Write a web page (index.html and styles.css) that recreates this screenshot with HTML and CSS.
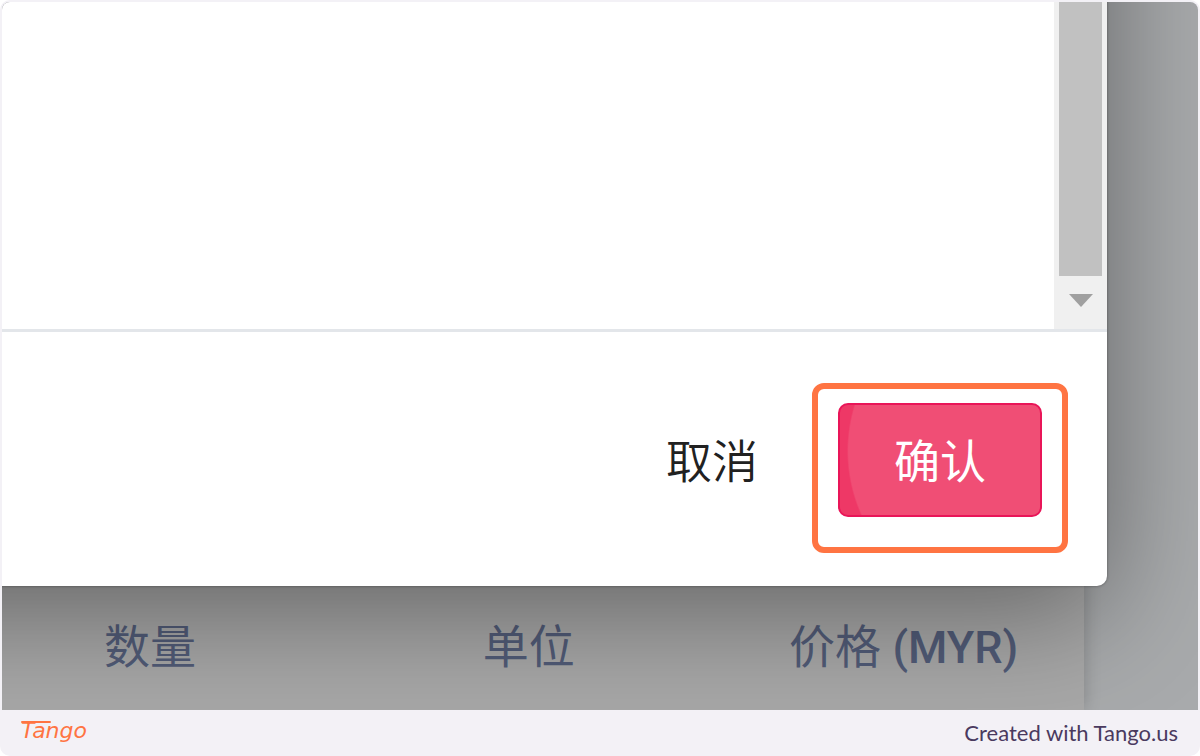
FILE: index.html
```html
<!DOCTYPE html>
<html lang="zh-CN">
<head>
    <meta charset="UTF-8">
    <meta name="viewport" content="width=device-width, initial-scale=1.0">
    <title>Tango</title>
    <link rel="stylesheet" href="styles.css">
</head>
<body>
    <div class="card">
        <main class="screen">
            <div class="sheet">
                <table class="items">
                    <thead>
                        <tr>
                            <th class="col-qty" scope="col">数量</th>
                            <th class="col-unit" scope="col">单位</th>
                            <th class="col-price" scope="col">价格 <span class="currency">(MYR)</span></th>
                        </tr>
                    </thead>
                </table>
            </div>

            <div class="modal" role="dialog">
                <div class="modal-body">
                    <div class="scrollbar">
                        <div class="thumb"></div>
                        <svg class="arrow" width="24" height="13" viewBox="0 0 24 13">
                            <path d="M0 0H24L12 13Z" fill="#a0a0a0"/>
                        </svg>
                    </div>
                </div>
                <div class="modal-footer">
                    <button class="btn cancel" type="button">取消</button>
                    <div class="highlight">
                        <button class="btn confirm" type="button">确认</button>
                    </div>
                </div>
            </div>
        </main>

        <footer class="footer">
            <svg class="logo" width="84" height="44" viewBox="0 0 84 44" role="img" aria-label="Tango">
                <path d="M4 12H32" fill="none" stroke="#ff7442" stroke-width="2" stroke-linecap="round"/>
                <text class="logo-text" x="3" y="28">Tango</text>
            </svg>
            <a class="credit" href="#">Created with Tango.us</a>
        </footer>
    </div>
</body>
</html>
```

FILE: styles.css
```css
* {
    box-sizing: border-box;
}

body {
    margin: 0;
    background-color: #fff;
    font-family: Roboto, "Noto Sans CJK SC", sans-serif;
}

.card {
    display: flex;
    flex-direction: column;
    min-height: 100vh;
    padding: 2px 2px 0;
    border-radius: 10px;
    background-color: #f3f1f6;
}

.screen {
    position: relative;
    display: flex;
    flex: 1;
    overflow: hidden;
    border-radius: 8px 8px 0 0;
    padding-right: 114px;
    background-color: #a8aaac;
}

/* page behind the dialog */
.sheet {
    display: flex;
    flex: 1;
    align-items: flex-end;
    background-color: #a8a8a8;
    box-shadow: 0 0 16px rgba(0, 0, 0, 0.2);
}

.items {
    width: 100%;
    table-layout: fixed;
    border-collapse: collapse;
}

.items th {
    height: 124px;
    padding: 0 0 2px;
    color: #525c78;
    font-size: 46px;
    font-weight: 400;
    line-height: 56px;
    white-space: nowrap;
}

.items .col-qty {
    width: 27%;
    padding-left: 4px;
}

.items .col-unit {
    width: 43%;
    padding-left: 4px;
}

.items .col-price {
    padding-right: 36px;
}

.items .currency {
    font-size: 45px;
    font-weight: 500;
}

/* dialog, runs past the top and left edges */
.modal {
    position: absolute;
    top: -160px;
    right: 91px;
    bottom: 124px;
    left: -160px;
    display: flex;
    flex-direction: column;
    border-radius: 10px;
    background-color: #fff;
    box-shadow: 0 0 3px rgba(0, 0, 0, 0.4), 0 24px 120px rgba(0, 0, 0, 0.42);
}

.modal-body {
    display: flex;
    flex: 1;
    justify-content: flex-end;
}

.scrollbar {
    display: flex;
    flex-direction: column;
    align-items: center;
    width: 53px;
    padding: 0 5px 22px;
    background-color: #f0f0f0;
}

.thumb {
    flex: 1;
    width: 100%;
    margin-bottom: 18px;
    background-color: #c1c1c1;
}

.modal-footer {
    display: flex;
    justify-content: flex-end;
    padding: 51px 39px 33px;
    border-top: 3px solid #e3e6ea;
}

.btn {
    height: 114px;
    border: 0;
    font-family: inherit;
    font-size: 46px;
    cursor: pointer;
}

.cancel {
    margin-top: 20px;
    padding: 0 54px 4px;
    background: none;
    color: #212121;
    font-weight: 350;
}

.highlight {
    padding: 14px 20px 30px;
    border: 6px solid #ff7442;
    border-radius: 12px;
}

.confirm {
    padding: 0 54px 4px;
    border: 2px solid #e91558;
    border-radius: 10px;
    background: radial-gradient(circle 157px at 164px 46px, #f04e75 99%, #ee3866 100%);
    color: #fff;
    font-weight: 400;
}

/* bottom strip */
.footer {
    display: flex;
    align-items: center;
    justify-content: space-between;
    height: 46px;
    padding: 0 20px 2px 16px;
}

.logo-text {
    fill: #ff7442;
    font-family: "DejaVu Sans", sans-serif;
    font-size: 22px;
    font-style: italic;
    font-weight: 200;
}

.credit {
    color: #4a3a5f;
    font-family: Lato, sans-serif;
    font-size: 22px;
    text-decoration: none;
}
```
